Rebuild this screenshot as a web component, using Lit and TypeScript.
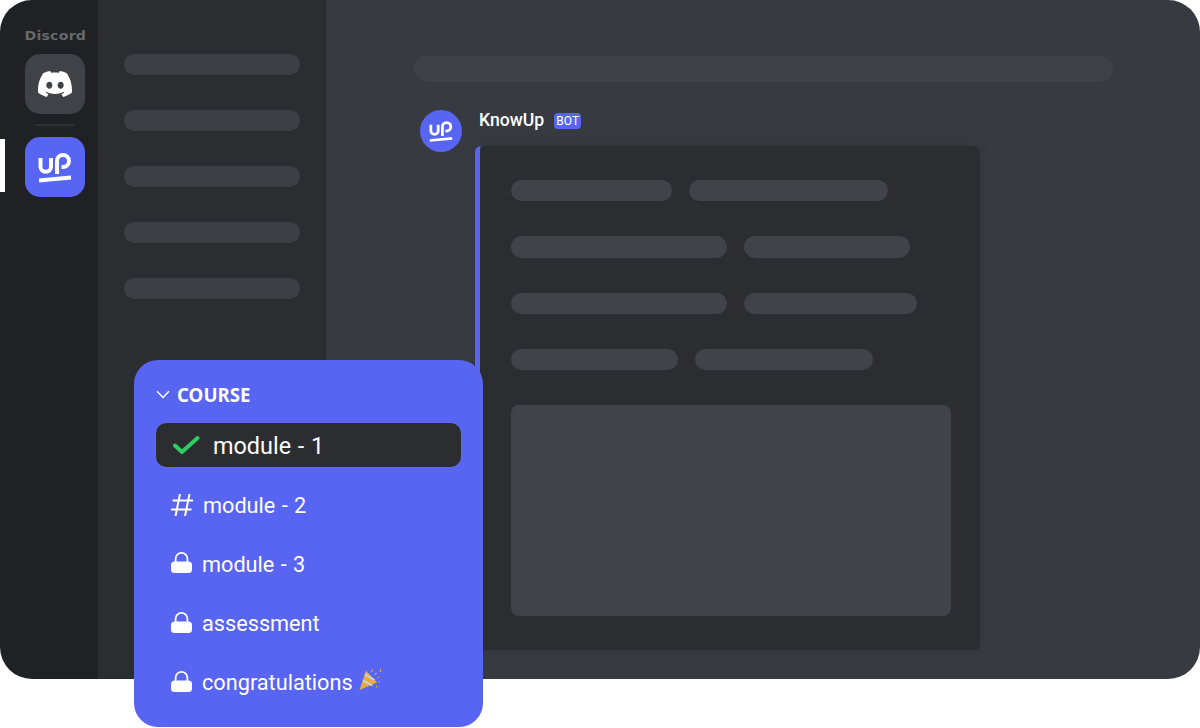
import { LitElement, html, css, svg } from 'lit';
import { customElement } from 'lit/decorators.js';

const channelPills = [0, 1, 2, 3, 4];

// pill widths per embed row, [left, right]
const embedRows = [
  [161, 199],
  [216, 166],
  [216, 173],
  [167, 178],
];

const upLogo = svg`
  <g fill="none" stroke="#fff" stroke-width="4">
    <path d="M15.5 21v8.5a5.25 5.25 0 0 0 10.5 0V21" />
    <path d="M32 37V24a6 6 0 1 1 6 6h-1.5" />
    <path d="M14 43.5 46 40.5" stroke-width="3.8" />
  </g>
`;

const discordLogo = svg`
  <path fill="#fff" d="M20.317 4.3698a19.7913 19.7913 0 00-4.8851-1.5152.0741.0741 0 00-.0785.0371c-.211.3753-.4447.8648-.6083 1.2495-1.8447-.2762-3.68-.2762-5.4868 0-.1636-.3933-.4058-.8742-.6177-1.2495a.077.077 0 00-.0785-.037 19.7363 19.7363 0 00-4.8852 1.515.0699.0699 0 00-.0321.0277C.5334 9.0458-.319 13.5799.0992 18.0578a.0824.0824 0 00.0312.0561c2.0528 1.5076 4.0413 2.4228 5.9929 3.0294a.0777.0777 0 00.0842-.0276c.4616-.6304.8731-1.2952 1.226-1.9942a.076.076 0 00-.0416-.1057c-.6528-.2476-1.2743-.5495-1.8722-.8923a.077.077 0 01-.0076-.1277c.1258-.0943.2517-.1923.3718-.2914a.0743.0743 0 01.0776-.0105c3.9278 1.7933 8.18 1.7933 12.0614 0a.0739.0739 0 01.0785.0095c.1202.099.246.1981.3728.2924a.077.077 0 01-.0066.1276 12.2986 12.2986 0 01-1.873.8914.0766.0766 0 00-.0407.1067c.3604.698.7719 1.3628 1.225 1.9932a.076.076 0 00.0842.0286c1.961-.6067 3.9495-1.5219 6.0023-3.0294a.077.077 0 00.0313-.0552c.5004-5.177-.8382-9.6739-3.5485-13.6604a.061.061 0 00-.0312-.0286zM8.02 15.3312c-1.1825 0-2.1569-1.0857-2.1569-2.419 0-1.3332.9555-2.4189 2.157-2.4189 1.2108 0 2.1757 1.0952 2.1568 2.419 0 1.3332-.9555 2.4189-2.1569 2.4189zm7.9748 0c-1.1825 0-2.1569-1.0857-2.1569-2.419 0-1.3332.9554-2.4189 2.1569-2.4189 1.2108 0 2.1757 1.0952 2.1568 2.419 0 1.3332-.946 2.4189-2.1568 2.4189Z" />
`;

const lockIcon = html`
  <svg class="icon lock" width="21" height="22" viewBox="0 0 21 22">
    <path d="M4.6 12V7.7a5.9 5.9 0 0 1 11.8 0V12" fill="none" stroke="#fff" stroke-width="1.8" />
    <rect x="0" y="10.5" width="21" height="11.5" rx="3.5" fill="#fff" />
  </svg>
`;

const hashIcon = html`
  <svg class="icon" width="22" height="22" viewBox="0 0 22 22">
    <path d="M9 0 4.5 22M18.5 0 14 22M1.5 6.5H22M0 15.5H20.5" fill="none" stroke="#fff" stroke-width="2" />
  </svg>
`;

const checkIcon = html`
  <svg class="icon" width="28" height="20" viewBox="0 0 28 20">
    <path d="M3 10.5 10 17 25.5 3" fill="none" stroke="#2ecc62" stroke-width="4" stroke-linecap="round" stroke-linejoin="round" />
  </svg>
`;

const popperIcon = html`
  <svg class="popper" width="24" height="24" viewBox="0 0 24 24">
    <path d="M0.5 22 7 2.5 18 14.5Z" fill="#e3ad40" />
    <path d="M4 12.5 13.5 17.5M6.2 6.5 15.5 12" stroke="#cfd3ef" stroke-width="1.6" fill="none" />
    <path d="M12 4 14 1.5M18.5 9.5 20 9M21.5 1v3M16 6.5l1.5-1.5M20 13l.6 1.5M17.5 18v1.5" stroke="#d8a94e" stroke-width="1.2" fill="none" />
  </svg>
`;

@customElement('app-root')
export class AppRoot extends LitElement {
  static styles = css`
    :host {
      display: block;
      position: relative;
      height: 728px;
      background: #fff;
      font-family: Roboto, sans-serif;
      overflow: hidden;
    }

    .frame {
      display: grid;
      grid-template-columns: 98px 228px 1fr;
      height: 679px;
      border-radius: 32px;
      overflow: hidden;
    }

    .rail {
      position: relative;
      background: #1f2124;
      display: flex;
      flex-direction: column;
      align-items: center;
      padding-top: 29px;
      padding-left: 12px;
    }

    .rail-label {
      font-family: 'DejaVu Sans', sans-serif;
      font-size: 12.5px;
      font-weight: 700;
      line-height: 14px;
      letter-spacing: 0.2px;
      color: #66696d;
      margin-bottom: 11px;
      white-space: nowrap;
      transform: scaleX(1.13);
    }

    .tile {
      width: 60px;
      height: 60px;
      border-radius: 15px;
      background: #3f4246;
      display: flex;
      align-items: center;
      justify-content: center;
    }

    .tile.up {
      background: #5865f2;
    }

    .rail-divider {
      width: 40px;
      height: 2px;
      margin: 10px 0 11px;
      border-radius: 1px;
      background: #2e3034;
    }

    .indicator {
      position: absolute;
      left: 0;
      top: 139px;
      width: 5px;
      height: 53px;
      background: #fff;
    }

    .channels {
      background: #2b2d31;
      display: flex;
      flex-direction: column;
      gap: 35px;
      padding: 54px 26px 0;
    }

    .pill {
      height: 21px;
      border-radius: 11px;
      background: #3c3f43;
    }

    .main {
      background: #383a42;
      padding: 56px 87px 0 88px;
    }

    .search {
      height: 26px;
      border-radius: 13px;
      background: #3e4146;
    }

    .message-head {
      display: flex;
      align-items: flex-start;
      height: 36px;
      margin: 28px 0 0 6px;
    }

    .avatar {
      flex: none;
      width: 42px;
      height: 42px;
      border-radius: 50%;
      background: #5865f2;
      margin-right: 17px;
    }

    .name {
      font-size: 17.6px;
      font-weight: 500;
      line-height: 21px;
      color: #fff;
      margin-right: 10px;
    }

    .badge {
      margin-top: 3px;
      width: 27px;
      height: 16px;
      border-radius: 4px;
      background: #5865f2;
      color: #fff;
      font-size: 12px;
      line-height: 16px;
      text-align: center;
    }

    .embed {
      box-sizing: border-box;
      width: 505px;
      height: 504px;
      margin-left: 61px;
      padding: 34px 29px 0 31px;
      border-left: 5px solid #5865f2;
      border-radius: 6px;
      background: #2b2d31;
      box-shadow: 0 0 8px rgba(0, 0, 0, 0.12);
      display: flex;
      flex-direction: column;
      gap: 35px;
    }

    .embed-row {
      display: flex;
      gap: 17px;
    }

    .embed-row .pill {
      height: 21.33px;
      background: #404347;
    }

    .embed-block {
      height: 211px;
      border-radius: 8px;
      background: #404347;
    }

    .course {
      position: absolute;
      left: 134px;
      top: 360px;
      box-sizing: border-box;
      width: 349px;
      height: 367px;
      padding: 21px 22px 0;
      border-radius: 24px;
      background: #5765f2;
      color: #fff;
    }

    .course-head {
      display: flex;
      align-items: center;
      height: 26px;
      font-family: 'Noto Sans', sans-serif;
      font-size: 18.7px;
      font-weight: 700;
    }

    .course-head svg {
      margin-right: 7px;
    }

    .active {
      display: flex;
      align-items: center;
      height: 44px;
      margin-top: 16px;
      padding-left: 16px;
      gap: 13px;
      border-radius: 10px;
      background: #2b2d31;
      font-size: 23.4px;
      font-weight: 400;
      word-spacing: 1px;
      box-shadow: 0 0 0 0.5px rgba(255, 255, 255, 0.08);
    }

    .active span {
      padding-top: 2px;
    }

    .rows {
      display: flex;
      flex-direction: column;
      gap: 29.3px;
      margin-top: 23px;
      padding-left: 15px;
    }

    .row {
      display: flex;
      align-items: center;
      height: 30px;
      gap: 10px;
      font-size: 21.7px;
      font-weight: 400;
      word-spacing: 1px;
      white-space: nowrap;
    }

    .icon {
      flex: none;
    }

    .lock {
      margin-top: -4px;
    }

    .popper {
      flex: none;
      margin: -6px 0 0 -4px;
    }
  `;

  render() {
    return html`
      <div class="frame">
        <nav class="rail">
          <div class="rail-label">Discord</div>
          <div class="tile">
            <svg width="34" height="34" viewBox="0 0 24 24">${discordLogo}</svg>
          </div>
          <div class="rail-divider"></div>
          <div class="tile up">
            <svg width="60" height="60" viewBox="0 0 60 60">${upLogo}</svg>
          </div>
          <div class="indicator"></div>
        </nav>
        <aside class="channels">
          ${channelPills.map(() => html`<div class="pill"></div>`)}
        </aside>
        <main class="main">
          <div class="search"></div>
          <div class="message-head">
            <div class="avatar">
              <svg width="42" height="42" viewBox="0 0 60 60">${upLogo}</svg>
            </div>
            <div class="name">KnowUp</div>
            <div class="badge">BOT</div>
          </div>
          <div class="embed">
            ${embedRows.map(
              ([a, b]) => html`
                <div class="embed-row">
                  <div class="pill" style="width:${a}px"></div>
                  <div class="pill" style="width:${b}px"></div>
                </div>
              `
            )}
            <div class="embed-block"></div>
          </div>
        </main>
      </div>

      <section class="course">
        <div class="course-head">
          <svg width="14" height="9" viewBox="0 0 14 9">
            <path d="M1 1.2 7 7.5 13 1.2" fill="none" stroke="#fff" stroke-width="1.5" />
          </svg>
          COURSE
        </div>
        <div class="active">${checkIcon}<span>module - 1</span></div>
        <div class="rows">
          <div class="row">${hashIcon}<span>module - 2</span></div>
          <div class="row">${lockIcon}<span>module - 3</span></div>
          <div class="row">${lockIcon}<span>assessment</span></div>
          <div class="row">${lockIcon}<span>congratulations</span>${popperIcon}</div>
        </div>
      </section>
    `;
  }
}

declare global {
  interface HTMLElementTagNameMap {
    'app-root': AppRoot;
  }
}
